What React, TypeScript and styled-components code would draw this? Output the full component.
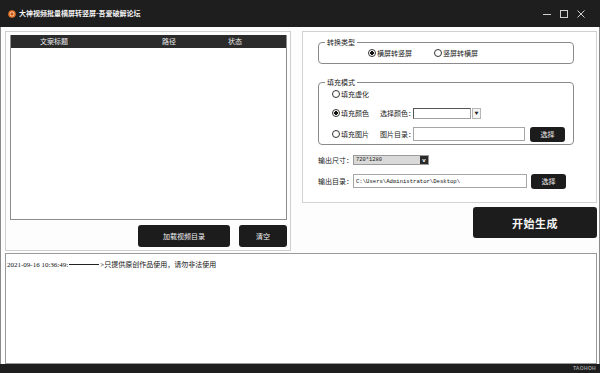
import React from 'react';
import styled, { createGlobalStyle } from 'styled-components';

const GlobalStyle = createGlobalStyle`
    html, body {
        margin: 0;
        padding: 0;
        background: #ffffff;
    }
    body {
        font-family: "Noto Sans CJK SC", "Liberation Sans", sans-serif;
        color: #222;
    }
`;

const Window = styled.div`
    width: 600px;
    height: 373px;
    display: flex;
    flex-direction: column;
    background: #fdfdfd;
    overflow: hidden;
`;

const TitleBar = styled.div`
    height: 27px;
    flex: none;
    display: flex;
    align-items: center;
    padding-left: 8px;
    background: #1e1e1e;
`;

const TitleText = styled.span`
    margin-left: 3px;
    color: #f2f2f2;
    font-size: 7px;
    font-weight: 700;
    line-height: 1;
`;

const Controls = styled.div`
    margin-left: auto;
    padding-right: 15px;
    display: flex;
    align-items: center;
    gap: 9px;
`;

const Body = styled.div`
    flex: 1;
    display: flex;
    flex-direction: column;
    padding: 4px 2px 0 4px;
    border-left: 1px solid #8a8a8a;
    border-right: 1px solid #8a8a8a;
`;

const TopRow = styled.div`
    height: 220px;
    display: flex;
    gap: 11px;
`;

const LeftPanel = styled.div`
    width: 286px;
    box-sizing: border-box;
    border: 1px solid #cfcfcf;
    padding: 3px 3px 0 4px;
    display: flex;
    flex-direction: column;
`;

const Table = styled.div`
    height: 185px;
    box-sizing: border-box;
    border: 1px solid #8c8c8c;
    border-top: none;
    background: #fff;
`;

const TableHeader = styled.div`
    height: 13px;
    display: grid;
    grid-template-columns: 86px 58px 28px 38px 28px 1fr;
    align-items: center;
    background: #2b2b2b;
    color: #eaeaea;
    font-size: 7px;
    line-height: 1;
`;

const HeaderCell = styled.span<{ $col: number }>`
    grid-column: ${p => p.$col};
    text-align: center;
    white-space: nowrap;
`;

const ButtonRow = styled.div`
    margin-top: 5px;
    display: flex;
    justify-content: flex-end;
    gap: 9px;
`;

const DarkButton = styled.button<{ $w: number; $h: number; $ml?: number }>`
    width: ${p => p.$w}px;
    height: ${p => p.$h}px;
    margin-left: ${p => p.$ml ?? 0}px;
    padding: 0;
    border: none;
    border-radius: 3px;
    background: #1c1c1c;
    color: #f0f0f0;
    font-family: "Noto Sans CJK SC", sans-serif;
    font-size: 7px;
    line-height: 1;
`;

const RightColumn = styled.div`
    flex: 1;
    display: flex;
    flex-direction: column;
`;

const RightPanel = styled.div`
    height: 172px;
    box-sizing: border-box;
    border: 1px solid #d2d2d2;
    padding: 10px 0 0 15px;
    display: flex;
    flex-direction: column;
    background: #fff;
`;

const Group = styled.div<{ $h: number; $mt?: number }>`
    position: relative;
    width: 256px;
    height: ${p => p.$h}px;
    margin-top: ${p => p.$mt ?? 0}px;
    box-sizing: border-box;
    border: 1px solid #8a8a8a;
    border-radius: 4px;
`;

const Legend = styled.span`
    position: absolute;
    top: -5px;
    left: 6px;
    padding: 0 2px;
    background: #fff;
    font-size: 7px;
    line-height: 9px;
`;

const TypeRow = styled.div`
    height: 100%;
    display: flex;
    align-items: center;
    gap: 22px;
    padding-left: 49px;
`;

const FillRows = styled.div`
    display: flex;
    flex-direction: column;
    gap: 7px;
    padding: 5px 0 0 13px;
`;

const FillRow = styled.div<{ $h: number }>`
    height: ${p => p.$h}px;
    display: grid;
    grid-template-columns: 48px 33px auto auto;
    align-items: center;
    justify-content: start;
`;

const RadioItem = styled.label`
    display: flex;
    align-items: center;
    gap: 1px;
    font-size: 7px;
    line-height: 1;
    white-space: nowrap;
`;

const RadioCircle = styled.span<{ $on?: boolean }>`
    width: 8px;
    height: 8px;
    box-sizing: border-box;
    border: 1px solid #333;
    border-radius: 50%;
    background: ${p => (p.$on ? 'radial-gradient(circle, #111 0 1.8px, #fff 2px)' : '#fff')};
`;

const Label = styled.span`
    font-size: 7px;
    line-height: 1;
    white-space: nowrap;
`;

const Combo = styled.div`
    display: flex;
    height: 11px;
`;

const ComboField = styled.div`
    width: 58px;
    box-sizing: border-box;
    border: 1px solid #a0a0a0;
    border-left-color: #555;
    border-top-color: #555;
    background: #fff;
`;

const ComboArrow = styled.div`
    width: 9px;
    margin-left: 1px;
    box-sizing: border-box;
    border: 1px solid #b5b5b5;
    background: #f4f4f4;
    display: flex;
    align-items: center;
    justify-content: center;
    font-size: 4px;
    color: #222;
`;

const TextInput = styled.div<{ $w: number }>`
    width: ${p => p.$w}px;
    height: 14px;
    box-sizing: border-box;
    border: 1px solid #a6a6a6;
    background: #fff;
    display: flex;
    align-items: center;
    padding-left: 2px;
    font-family: "Liberation Mono", monospace;
    font-size: 5.6px;
    color: #111;
    white-space: nowrap;
`;

const OutRow = styled.div<{ $h: number; $mt: number }>`
    height: ${p => p.$h}px;
    margin-top: ${p => p.$mt}px;
    display: flex;
    align-items: center;
`;

const OutLabel = styled.span`
    width: 35px;
    font-size: 7px;
    line-height: 1;
    white-space: nowrap;
`;

const Select = styled.div`
    width: 76px;
    height: 10px;
    display: flex;
    box-sizing: border-box;
    border: 1px solid #9a9a9a;
    background: #d9d9d9;
`;

const SelectValue = styled.span`
    flex: 1;
    padding-left: 2px;
    font-family: "Liberation Mono", monospace;
    font-size: 5.4px;
    line-height: 8px;
    color: #222;
`;

const SelectArrow = styled.span`
    width: 8px;
    background: #2a2a2a;
    color: #fff;
    font-family: "Liberation Sans", sans-serif;
    font-size: 6px;
    font-weight: 700;
    line-height: 8px;
    text-align: center;
`;

const StartButton = styled.button`
    align-self: flex-end;
    width: 124px;
    height: 31px;
    margin-top: 4px;
    border: none;
    border-radius: 3px;
    background: #1c1c1c;
    color: #f5f5f5;
    font-family: "Noto Sans CJK SC", sans-serif;
    font-size: 11px;
    font-weight: 700;
    letter-spacing: 0.5px;
`;

const LogBox = styled.div`
    height: 111px;
    margin-top: 2px;
    box-sizing: border-box;
    border: 1px solid #9a9a9a;
    background: #fff;
    padding: 7px 0 0 1px;
    font-family: "Liberation Serif", "Noto Sans CJK SC", serif;
    font-size: 7px;
    line-height: 9px;
    color: #111;
    white-space: nowrap;
`;

const Arrow = styled.span`
    display: inline-block;
    width: 30px;
    height: 1.5px;
    margin: 0 1px 2px 1px;
    vertical-align: middle;
    background: #222;
`;

const StatusBar = styled.div`
    height: 9px;
    flex: none;
    background: #1e1e1e;
    display: flex;
    align-items: center;
    justify-content: flex-end;
    padding-right: 4px;
`;

const Mark = styled.span`
    color: #9a9a9a;
    font-family: "Liberation Sans", sans-serif;
    font-size: 5px;
    font-weight: 700;
    letter-spacing: 0.3px;
    line-height: 1;
`;

const AppIcon = () => (
    <svg width="8" height="8" viewBox="0 0 8 8">
        <circle cx="4" cy="4" r="3.8" fill="#e0702a" />
        <path d="M4 1.2v5.6M1.2 4h5.6M2 2l4 4M6 2L2 6" stroke="#fbd3a8" strokeWidth="0.8" />
        <circle cx="4" cy="4" r="1.2" fill="#c5551a" />
    </svg>
);

const WinIcon = ({ kind }: { kind: 'min' | 'max' | 'close' }) => (
    <svg width="8" height="8" viewBox="0 0 8 8" fill="none" stroke="#cfcfcf" strokeWidth="1">
        {kind === 'min' && <path d="M0 4.5h8" />}
        {kind === 'max' && <rect x="0.5" y="0.5" width="7" height="7" />}
        {kind === 'close' && <path d="M0.5 0.5l7 7M7.5 0.5l-7 7" />}
    </svg>
);

const App: React.FC = () => (
    <>
        <GlobalStyle />
        <Window>
            <TitleBar>
                <AppIcon />
                <TitleText>大神视频批量横屏转竖屏-吾爱破解论坛</TitleText>
                <Controls>
                    <WinIcon kind="min" />
                    <WinIcon kind="max" />
                    <WinIcon kind="close" />
                </Controls>
            </TitleBar>
            <Body>
                <TopRow>
                    <LeftPanel>
                        <Table>
                            <TableHeader>
                                <HeaderCell $col={1}>文案标题</HeaderCell>
                                <HeaderCell $col={3}>路径</HeaderCell>
                                <HeaderCell $col={5}>状态</HeaderCell>
                            </TableHeader>
                        </Table>
                        <ButtonRow>
                            <DarkButton $w={92} $h={22}>加载视频目录</DarkButton>
                            <DarkButton $w={48} $h={22}>清空</DarkButton>
                        </ButtonRow>
                    </LeftPanel>
                    <RightColumn>
                        <RightPanel>
                            <Group $h={22}>
                                <Legend>转换类型</Legend>
                                <TypeRow>
                                    <RadioItem><RadioCircle $on />横屏转竖屏</RadioItem>
                                    <RadioItem><RadioCircle />竖屏转横屏</RadioItem>
                                </TypeRow>
                            </Group>
                            <Group $h={63} $mt={18}>
                                <Legend>填充模式</Legend>
                                <FillRows>
                                    <FillRow $h={12}>
                                        <RadioItem><RadioCircle />填充虚化</RadioItem>
                                    </FillRow>
                                    <FillRow $h={12}>
                                        <RadioItem><RadioCircle $on />填充颜色</RadioItem>
                                        <Label>选择颜色：</Label>
                                        <Combo>
                                            <ComboField />
                                            <ComboArrow>▼</ComboArrow>
                                        </Combo>
                                    </FillRow>
                                    <FillRow $h={16}>
                                        <RadioItem><RadioCircle />填充图片</RadioItem>
                                        <Label>图片目录：</Label>
                                        <TextInput $w={112} />
                                        <DarkButton $w={35} $h={15} $ml={5}>选择</DarkButton>
                                    </FillRow>
                                </FillRows>
                            </Group>
                            <OutRow $h={12} $mt={9}>
                                <OutLabel>输出尺寸：</OutLabel>
                                <Select>
                                    <SelectValue>720*1280</SelectValue>
                                    <SelectArrow>v</SelectArrow>
                                </Select>
                            </OutRow>
                            <OutRow $h={16} $mt={7}>
                                <OutLabel>输出目录：</OutLabel>
                                <TextInput $w={174}>C:\Users\Administrator\Desktop\</TextInput>
                                <DarkButton $w={35} $h={15} $ml={4}>选择</DarkButton>
                            </OutRow>
                        </RightPanel>
                        <StartButton>开始生成</StartButton>
                    </RightColumn>
                </TopRow>
                <LogBox>
                    2021-09-16 10:36:49:<Arrow />&gt;只提供原创作品使用，请勿非法使用
                </LogBox>
            </Body>
            <StatusBar>
                <Mark>TAOHOH</Mark>
            </StatusBar>
        </Window>
    </>
);

export default App;
